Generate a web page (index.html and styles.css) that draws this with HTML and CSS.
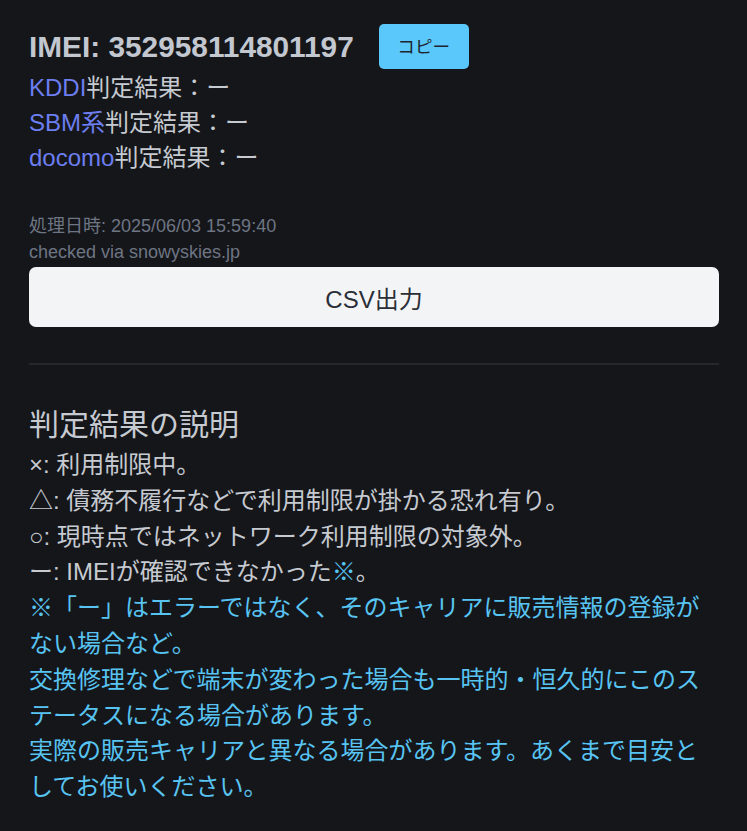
FILE: index.html
```html
<!DOCTYPE html>
<html lang="ja">
<head>
<meta charset="utf-8">
<title>IMEI判定結果</title>
<link rel="stylesheet" href="styles.css">
</head>
<body>
<main class="page">
  <section class="result">
    <div class="imei-row">
      <h1 class="imei">IMEI: 352958114801197</h1>
      <button class="copy-btn" type="button">コピー</button>
    </div>
    <div class="carriers">
      <div class="carrier"><span class="carrier-name">KDDI</span>判定結果：ー</div>
      <div class="carrier"><span class="carrier-name">SBM系</span>判定結果：ー</div>
      <div class="carrier"><span class="carrier-name">docomo</span>判定結果：ー</div>
    </div>
    <div class="meta">
      <div>処理日時: 2025/06/03 15:59:40</div>
      <div>checked via snowyskies.jp</div>
    </div>
    <button class="csv-btn" type="button">CSV出力</button>
  </section>
  <hr class="divider">
  <section class="legend">
    <h2 class="legend-title">判定結果の説明</h2>
    <p class="legend-line">×: 利用制限中。</p>
    <p class="legend-line">△: 債務不履行などで利用制限が掛かる恐れ有り。</p>
    <p class="legend-line">○: 現時点ではネットワーク利用制限の対象外。</p>
    <p class="legend-line">ー: IMEIが確認できなかった<span class="note">※</span>。</p>
    <p class="legend-line note">※「ー」はエラーではなく、そのキャリアに販売情報の登録がない場合など。<br>交換修理などで端末が変わった場合も一時的・恒久的にこのステータスになる場合があります。<br>実際の販売キャリアと異なる場合があります。あくまで目安としてお使いください。</p>
  </section>
</main>
</body>
</html>
```
FILE: styles.css
```css
html, body {
  margin: 0;
  padding: 0;
  background: #15161a;
}
body {
  font-family: "Liberation Sans", "Noto Sans CJK JP", sans-serif;
  color: #c6cad1;
}
.page {
  padding: 24px 28px 30px 29px;
}
.imei-row {
  display: flex;
  align-items: center;
  gap: 25px;
}
.imei {
  margin: 0;
  font-size: 29.8px;
  line-height: 45px;
  font-weight: 700;
  color: #c2c7d0;
}
.copy-btn {
  font-family: inherit;
  font-size: 17.6px;
  line-height: 26px;
  height: 45px;
  width: 90px;
  padding: 0;
  border: none;
  border-radius: 5px;
  background: #5ac8fa;
  color: #1c2430;
}
.carriers {
  margin-top: 1px;
  font-size: 24px;
  line-height: 35px;
}
.carrier-name {
  color: #6c7ef0;
}
.meta {
  margin-top: 38px;
  font-size: 18px;
  line-height: 26px;
  color: #6e7583;
}
.csv-btn {
  display: block;
  width: 100%;
  height: 60px;
  margin-top: 2px;
  border: none;
  border-radius: 7px;
  background: #f3f4f6;
  color: #2a2e36;
  font-family: inherit;
  font-size: 24px;
}
.divider {
  margin: 36px 0 0;
  border: none;
  height: 2px;
  background: #25272c;
}
.legend {
  margin-top: 38px;
}
.legend-title {
  margin: 0;
  font-size: 30px;
  line-height: 44px;
  font-weight: 400;
  color: #c6cad1;
}
.legend-line {
  margin: 0;
  font-size: 24px;
  line-height: 35.8px;
}
.note {
  color: #58c4f2;
}
```
